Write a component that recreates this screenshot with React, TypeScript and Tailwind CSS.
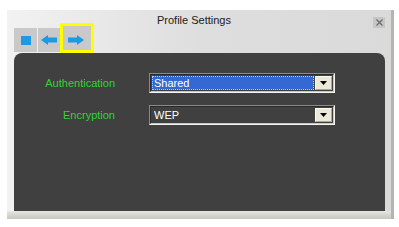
import React from "react";

function Select({ value, active }: { value: string; active?: boolean }) {
  return (
    <div className="flex h-[20px] w-[186px] border border-t-[#8a8a8a] border-l-[#8a8a8a] border-b-[#f4f4f4] border-r-[#f4f4f4]">
      <div className="flex flex-1 items-center border border-t-[#2a2a2a] border-l-[#2a2a2a] border-b-[#c8c8c0] border-r-[#c8c8c0] p-[1px]">
        <div
          className={
            active
              ? "flex h-full flex-1 items-center border border-dotted border-[#b8c8f0] bg-[#3468d2] pl-[1px] text-white"
              : "flex h-full flex-1 items-center pl-[2px] text-white"
          }
        >
          {value}
        </div>
        {/* dropdown arrow button */}
        <div className="ml-[1px] flex h-full w-[17px] items-center justify-center border border-t-[#fbfaf5] border-l-[#fbfaf5] border-b-[#a8a69a] border-r-[#a8a69a] bg-[#ece9d8]">
          <svg width="7" height="4" viewBox="0 0 7 4">
            <path d="M0 0h7L3.5 4z" fill="#000" />
          </svg>
        </div>
      </div>
    </div>
  );
}

export default function App() {
  return (
    <div
      className="h-[227px] w-[399px] bg-white pl-[7px] pt-[10px] text-[11px]"
      style={{ fontFamily: '"Liberation Sans", Arial, sans-serif' }}
    >
      <div className="flex h-[209px] w-[387px] flex-col border-r-[3px] border-r-[#b4b4b0] bg-gradient-to-r from-[#f2f2f2] via-[#dedede] to-[#dadada]">
        {/* title row */}
        <div className="flex h-[18px]">
          <div className="pl-[150px] pt-[4px] text-[11px] leading-[13px] text-[#202020]">Profile Settings</div>
          <div className="ml-auto mr-[6px] mt-[7px] flex h-[11px] w-[12px] items-center justify-center bg-[#c6c6c6]">
            <svg width="7" height="7" viewBox="0 0 7 7">
              <path d="M0.5 0.5l6 6M6.5 0.5l-6 6" stroke="#6e6e6e" strokeWidth="1.4" />
            </svg>
          </div>
        </div>

        {/* toolbar */}
        <div className="flex h-[25px] items-start pl-[7px]">
          <div className="flex h-[24px] w-[23px] items-center justify-center bg-[#c9c9c9]">
            <div className="h-[9px] w-[10px] bg-[#1c9ae6]" />
          </div>
          <div className="ml-[1px] flex h-[24px] w-[22px] items-center justify-center bg-[#c9c9c9]">
            <svg width="16" height="10" viewBox="0 0 16 10">
              <path d="M0 5L7 0v2.5h9v5H7V10z" fill="#1c9ae6" />
            </svg>
          </div>
          <div className="mt-[-5px] flex h-[30px] w-[34px] items-center justify-center border-[3px] border-[#ffff00] bg-[#c9c9c9]">
            <svg width="16" height="10" viewBox="0 0 16 10" className="ml-[-3px] mt-[3px]">
              <path d="M16 5L9 0v2.5H0v5h9V10z" fill="#1c9ae6" />
            </svg>
          </div>
        </div>

        {/* content panel */}
        <div className="ml-[7px] flex h-[158px] w-[371px] flex-col gap-[12px] rounded-t-[8px] bg-[#404040] pt-[20px]">
          <div className="flex items-center">
            <div className="w-[101px] text-right text-[#33d233]">Authentication</div>
            <div className="ml-[34px]">
              <Select value="Shared" active />
            </div>
          </div>
          <div className="flex items-center">
            <div className="w-[101px] text-right text-[#33d233]">Encryption</div>
            <div className="ml-[34px]">
              <Select value="WEP" />
            </div>
          </div>
        </div>

        {/* bottom edge */}
        <div className="h-[8px] bg-gradient-to-b from-[#e6e6e2] to-[#c6c6be]" />
      </div>
    </div>
  );
}
